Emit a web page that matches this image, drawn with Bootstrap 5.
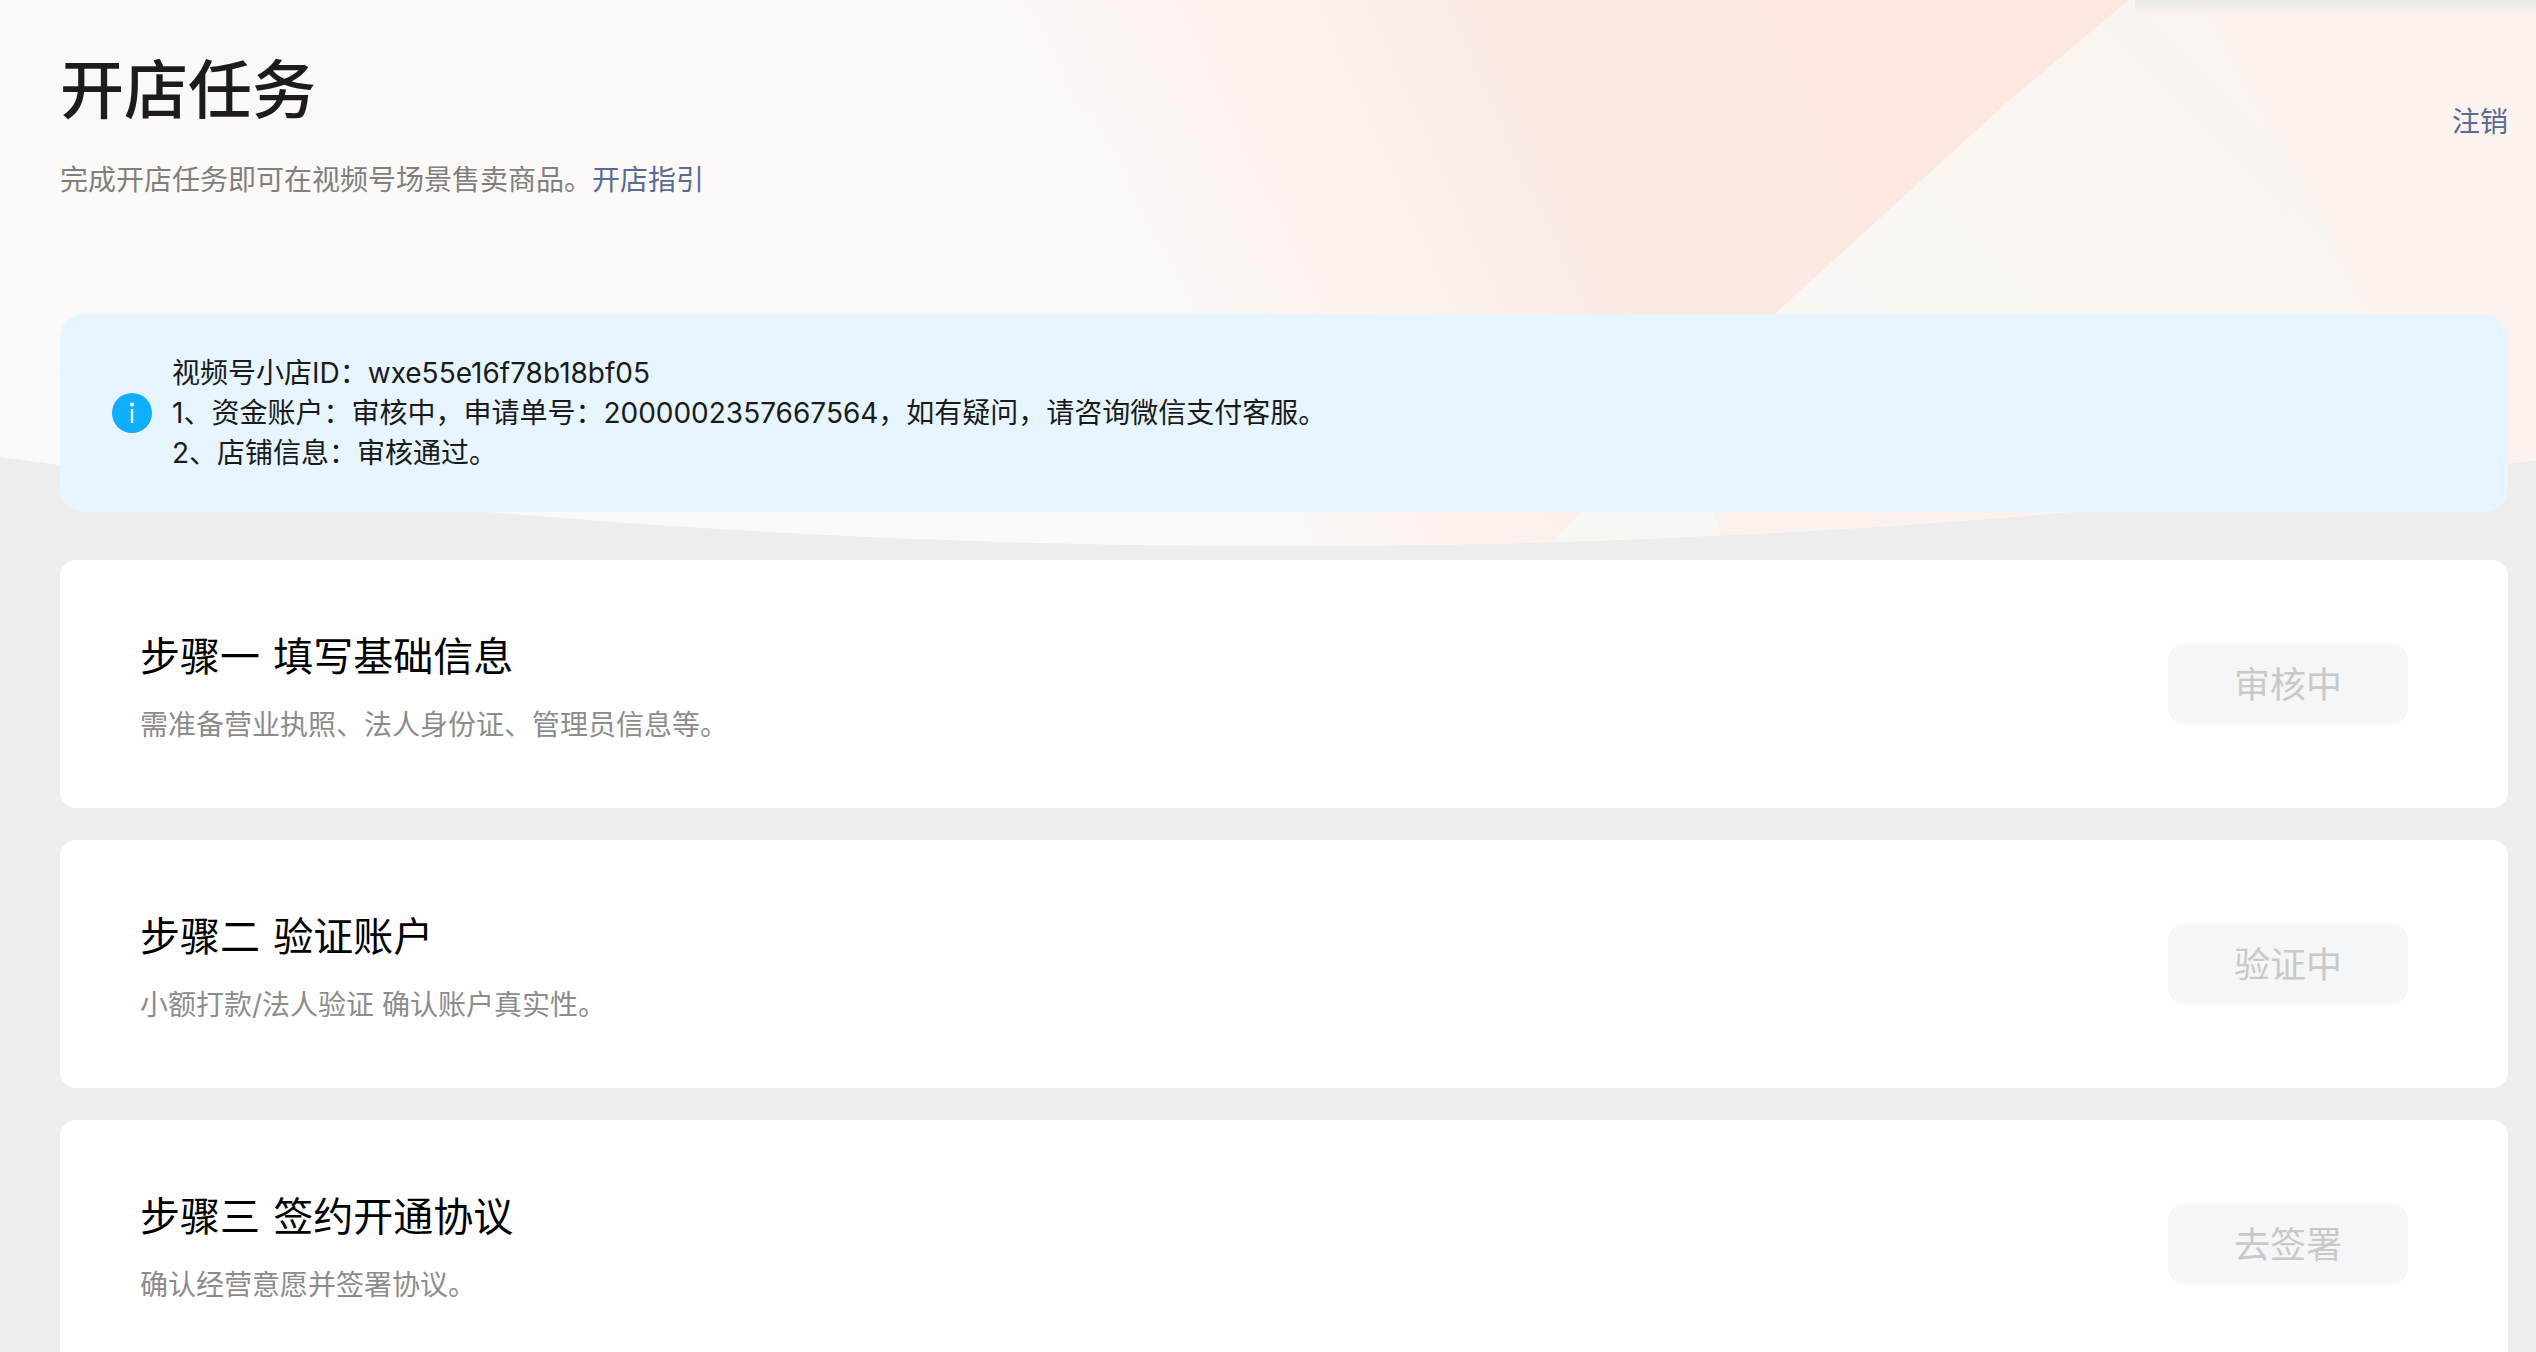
<!DOCTYPE html>
<html lang="zh-CN">
<head>
    <meta charset="UTF-8">
    <meta name="viewport" content="width=device-width, initial-scale=1.0">
    <title>开店任务</title>
    <link href="https://cdn.jsdelivr.net/npm/bootstrap@5.3.0/dist/css/bootstrap.min.css" rel="stylesheet">
    <style>
        html, body { height: 100%; overflow: hidden; }
        body { background-color: #ededed; font-family: Inter, "Noto Sans CJK SC", sans-serif; color: #1a1a1a; position: relative; }
        .top-decor { position: absolute; top: 0; left: 0; width: 2536px; height: 560px; z-index: 0; }
        .page-wrap { position: relative; z-index: 1; padding: 45px 28px 0 60px; }
        .page-title { font-size: 64px; line-height: 90px; font-weight: 500; margin: 0; color: #1c1c1c; }
        .page-desc { font-size: 28px; line-height: 40px; color: #7f7f7f; margin: 25px 0 0; }
        .wx-link { color: #576b95; text-decoration: none; }
        .logout-link { font-size: 28px; line-height: 40px; margin-top: 57px; }
        .notice-box { background-color: #e6f5ff; border: 0; border-radius: 24px; margin: 114px 0 48px; padding: 39px 52px; gap: 20px; font-size: 28px; line-height: 40px; color: #1a1a1a; }
        .notice-icon { width: 40px; height: 40px; flex: none; }
        .step-card { border: 0; border-radius: 16px; height: 248px; margin-bottom: 32px; background-color: #fff; }
        .step-body { padding: 0 100px 0 80px; }
        .step-text { padding-top: 6px; }
        .step-title { font-size: 40px; line-height: 56px; font-weight: 400; color: #000; margin: 0; word-spacing: 2px; }
        .step-desc { font-size: 28px; line-height: 40px; color: #8c8c8c; margin: 20px 0 0; }
        .step-btn, .step-btn:disabled { width: 240px; height: 80px; padding: 2px 0 0; border: 0; border-radius: 16px; background-color: #f5f6f7; color: #c8c9c9; font-size: 36px; line-height: 78px; opacity: 1; }
    </style>
</head>
<body>
    <svg class="top-decor" viewBox="0 0 2536 560" aria-hidden="true">
        <defs>
            <clipPath id="topCurve"><path d="M0 457 Q1268 634 2536 460 V0 H0 Z"/></clipPath>
            <linearGradient id="baseFade" x1="0" y1="0" x2="0" y2="1">
                <stop offset="0" stop-color="#fcf8f6"/>
                <stop offset="1" stop-color="#fbfaf8"/>
            </linearGradient>
            <linearGradient id="peachBand" gradientUnits="userSpaceOnUse" x1="1000" y1="0" x2="1685" y2="-306">
                <stop offset="0" stop-color="#fcf3ef" stop-opacity="0"/>
                <stop offset="0.25" stop-color="#fcf3ef"/>
                <stop offset="0.6" stop-color="#fbebe3"/>
                <stop offset="1" stop-color="#fbe9e0"/>
            </linearGradient>
            <linearGradient id="wedgeFill" gradientUnits="userSpaceOnUse" x1="1800" y1="500" x2="2300" y2="0">
                <stop offset="0" stop-color="#f9f7f4"/>
                <stop offset="1" stop-color="#fbf4f0"/>
            </linearGradient>
            <linearGradient id="shadowTop" x1="0" y1="0" x2="0" y2="1">
                <stop offset="0" stop-color="#e9eae9"/>
                <stop offset="1" stop-color="#e9eae9" stop-opacity="0"/>
            </linearGradient>
        </defs>
        <g clip-path="url(#topCurve)">
            <rect width="2536" height="560" fill="url(#baseFade)"/>
            <polygon points="1000,0 2129,0 2010,100 1775,314 1582,512 1535,560 1250,560" fill="url(#peachBand)"/>
            <polygon points="2129,0 2536,0 2536,560 1535,560 1582,512 1775,314 2010,100" fill="url(#wedgeFill)"/>
            <polygon points="2202,0 2536,0 2536,560 2505,560" fill="#fcf2ee"/>
            <polygon points="1713,512 2536,512 2536,560 1730,560" fill="#fbf2ee"/>
            <rect x="2135" y="0" width="401" height="16" fill="url(#shadowTop)"/>
        </g>
    </svg>

    <div class="page-wrap">
        <div class="d-flex justify-content-between align-items-start">
            <div>
                <h1 class="page-title">开店任务</h1>
                <p class="page-desc">完成开店任务即可在视频号场景售卖商品。<a href="#" class="wx-link">开店指引</a></p>
            </div>
            <a href="#" class="wx-link logout-link">注销</a>
        </div>

        <div class="alert notice-box d-flex align-items-center" role="alert">
            <svg class="notice-icon" viewBox="0 0 40 40" aria-hidden="true">
                <circle cx="20" cy="20" r="20" fill="#10aeff"/>
                <circle cx="20" cy="11.5" r="2" fill="#fff"/>
                <rect x="18.8" y="16" width="2.4" height="14" fill="#fff"/>
            </svg>
            <div>
                <div>视频号小店ID：wxe55e16f78b18bf05</div>
                <div>1、资金账户：审核中，申请单号：2000002357667564，如有疑问，请咨询微信支付客服。</div>
                <div>2、店铺信息：审核通过。</div>
            </div>
        </div>

        <div class="card step-card">
            <div class="card-body step-body d-flex justify-content-between align-items-center">
                <div class="step-text">
                    <h2 class="step-title">步骤一 填写基础信息</h2>
                    <p class="step-desc">需准备营业执照、法人身份证、管理员信息等。</p>
                </div>
                <button type="button" class="btn step-btn" disabled>审核中</button>
            </div>
        </div>
        <div class="card step-card">
            <div class="card-body step-body d-flex justify-content-between align-items-center">
                <div class="step-text">
                    <h2 class="step-title">步骤二 验证账户</h2>
                    <p class="step-desc">小额打款/法人验证 确认账户真实性。</p>
                </div>
                <button type="button" class="btn step-btn" disabled>验证中</button>
            </div>
        </div>
        <div class="card step-card">
            <div class="card-body step-body d-flex justify-content-between align-items-center">
                <div class="step-text">
                    <h2 class="step-title">步骤三 签约开通协议</h2>
                    <p class="step-desc">确认经营意愿并签署协议。</p>
                </div>
                <button type="button" class="btn step-btn" disabled>去签署</button>
            </div>
        </div>
    </div>

    <script src="https://cdn.jsdelivr.net/npm/bootstrap@5.3.0/dist/js/bootstrap.bundle.min.js"></script>
</body>
</html>
